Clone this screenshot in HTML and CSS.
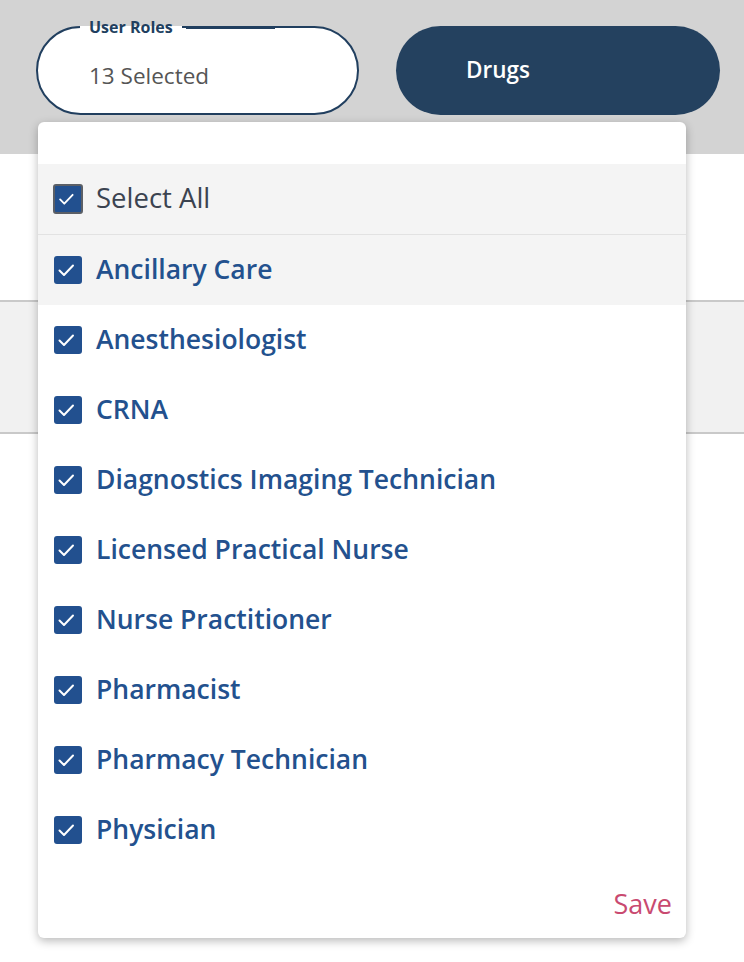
FILE: index.html
```html
<!DOCTYPE html>
<html>
<head>
<meta charset="utf-8">
<link rel="stylesheet" href="styles.css">
</head>
<body>
<div class="page">
  <header class="topbar">
    <div class="field">
      <span class="field-label">User Roles</span>
      <span class="field-notch"></span>
      <span class="field-value">13 Selected</span>
    </div>
    <div class="drugs">Drugs</div>
  </header>
  <div class="content">
    <div class="blank"></div>
    <div class="band"></div>
  </div>

  <div class="dropdown">
    <div class="dd-top"></div>
    <div class="opt opt-all">
      <span class="cb cb-focus"><svg viewBox="0 0 28 28"><path d="M5.5 14.5l4.5 4.5 9-9.5"/></svg></span>
      <span class="opt-label">Select All</span>
    </div>
    <div class="opt opt-hover">
      <span class="cb"><svg viewBox="0 0 28 28"><path d="M5.5 14.5l4.5 4.5 9-9.5"/></svg></span>
      <span class="opt-label">Ancillary Care</span>
    </div>
    <div class="opt">
      <span class="cb"><svg viewBox="0 0 28 28"><path d="M5.5 14.5l4.5 4.5 9-9.5"/></svg></span>
      <span class="opt-label">Anesthesiologist</span>
    </div>
    <div class="opt">
      <span class="cb"><svg viewBox="0 0 28 28"><path d="M5.5 14.5l4.5 4.5 9-9.5"/></svg></span>
      <span class="opt-label">CRNA</span>
    </div>
    <div class="opt">
      <span class="cb"><svg viewBox="0 0 28 28"><path d="M5.5 14.5l4.5 4.5 9-9.5"/></svg></span>
      <span class="opt-label">Diagnostics Imaging Technician</span>
    </div>
    <div class="opt">
      <span class="cb"><svg viewBox="0 0 28 28"><path d="M5.5 14.5l4.5 4.5 9-9.5"/></svg></span>
      <span class="opt-label">Licensed Practical Nurse</span>
    </div>
    <div class="opt">
      <span class="cb"><svg viewBox="0 0 28 28"><path d="M5.5 14.5l4.5 4.5 9-9.5"/></svg></span>
      <span class="opt-label">Nurse Practitioner</span>
    </div>
    <div class="opt">
      <span class="cb"><svg viewBox="0 0 28 28"><path d="M5.5 14.5l4.5 4.5 9-9.5"/></svg></span>
      <span class="opt-label">Pharmacist</span>
    </div>
    <div class="opt">
      <span class="cb"><svg viewBox="0 0 28 28"><path d="M5.5 14.5l4.5 4.5 9-9.5"/></svg></span>
      <span class="opt-label">Pharmacy Technician</span>
    </div>
    <div class="opt">
      <span class="cb"><svg viewBox="0 0 28 28"><path d="M5.5 14.5l4.5 4.5 9-9.5"/></svg></span>
      <span class="opt-label">Physician</span>
    </div>
    <div class="dd-footer">
      <span class="save">Save</span>
    </div>
  </div>
</div>
</body>
</html>
```

FILE: styles.css
```css
* { box-sizing: border-box; }
html, body { margin: 0; padding: 0; background: #fff; }
body {
  font-family: "Open Sans", "Liberation Sans", sans-serif;
  width: 744px;
  height: 962px;
  overflow: hidden;
}
.page { position: relative; width: 744px; height: 962px; }

.topbar {
  height: 154px;
  background: #d3d3d3;
  display: flex;
  align-items: flex-start;
  padding: 26px 0 0 36px;
  gap: 37px;
}
.field {
  position: relative;
  width: 323px;
  height: 89px;
  border: 2px solid #213f5f;
  border-radius: 45px;
  background: #fff;
  display: flex;
  align-items: center;
  padding: 10px 0 0 51px;
}
.field-label {
  position: absolute;
  left: 42px;
  top: -11px;
  padding: 0 9px;
  font-size: 16px;
  line-height: 20px;
  font-weight: 700;
  color: #213f5f;
  background: linear-gradient(to bottom, transparent 9px, #fff 9px);
}
.field-notch {
  position: absolute;
  left: 148px;
  top: -2px;
  width: 89px;
  height: 3px;
  background: #213f5f;
}
.field-value {
  font-size: 22.5px;
  color: #555;
}
.drugs {
  width: 324px;
  height: 89px;
  border-radius: 45px;
  background: #24415f;
  color: #fff;
  font-size: 22.5px;
  font-weight: 600;
  display: flex;
  align-items: center;
  padding: 0 0 2px 70px;
}

.content .blank { height: 146px; }
.content .band {
  height: 134px;
  background: #f1f1f1;
  border-top: 2px solid #c9c9c9;
  border-bottom: 2px solid #c9c9c9;
}

.dropdown {
  position: absolute;
  left: 38px;
  top: 122px;
  width: 648px;
  height: 816px;
  background: #fff;
  border-radius: 6px;
  box-shadow: 0 3px 10px rgba(0, 0, 0, 0.28);
  display: flex;
  flex-direction: column;
  overflow: hidden;
}
.dd-top { height: 42px; }
.opt {
  height: 70px;
  display: flex;
  align-items: center;
  padding-left: 16px;
  padding-bottom: 3px;
  gap: 14px;
}
.opt-all {
  background: #f4f4f4;
  border-bottom: 1px solid #e2e2e2;
  height: 71px;
  padding-bottom: 4px;
}
.opt-hover { background: #f4f4f4; }
.cb {
  width: 28px;
  height: 28px;
  border-radius: 3px;
  background: #22508f;
  flex: none;
  display: flex;
  margin-top: 3px;
}
.cb svg { width: 28px; height: 28px; }
.cb path {
  fill: none;
  stroke: #fff;
  stroke-width: 2;
  stroke-linecap: round;
  stroke-linejoin: round;
}
.cb-focus {
  border: 2px solid #5b5f66;
  width: 30px;
  height: 30px;
  margin-left: -1px;
  margin-right: -1px;
  padding: 0;
}
.cb-focus svg { width: 26px; height: 26px; }
.opt-label {
  font-size: 26.5px;
  font-weight: 600;
  color: #23518e;
}
.opt-all .opt-label { color: #3b4350; font-weight: 400; font-size: 27.5px; }
.dd-footer {
  flex: 1;
  display: flex;
  justify-content: flex-end;
  align-items: center;
  padding: 3px 14px 0 0;
}
.save {
  font-size: 27px;
  color: #c94a70;
}
```
